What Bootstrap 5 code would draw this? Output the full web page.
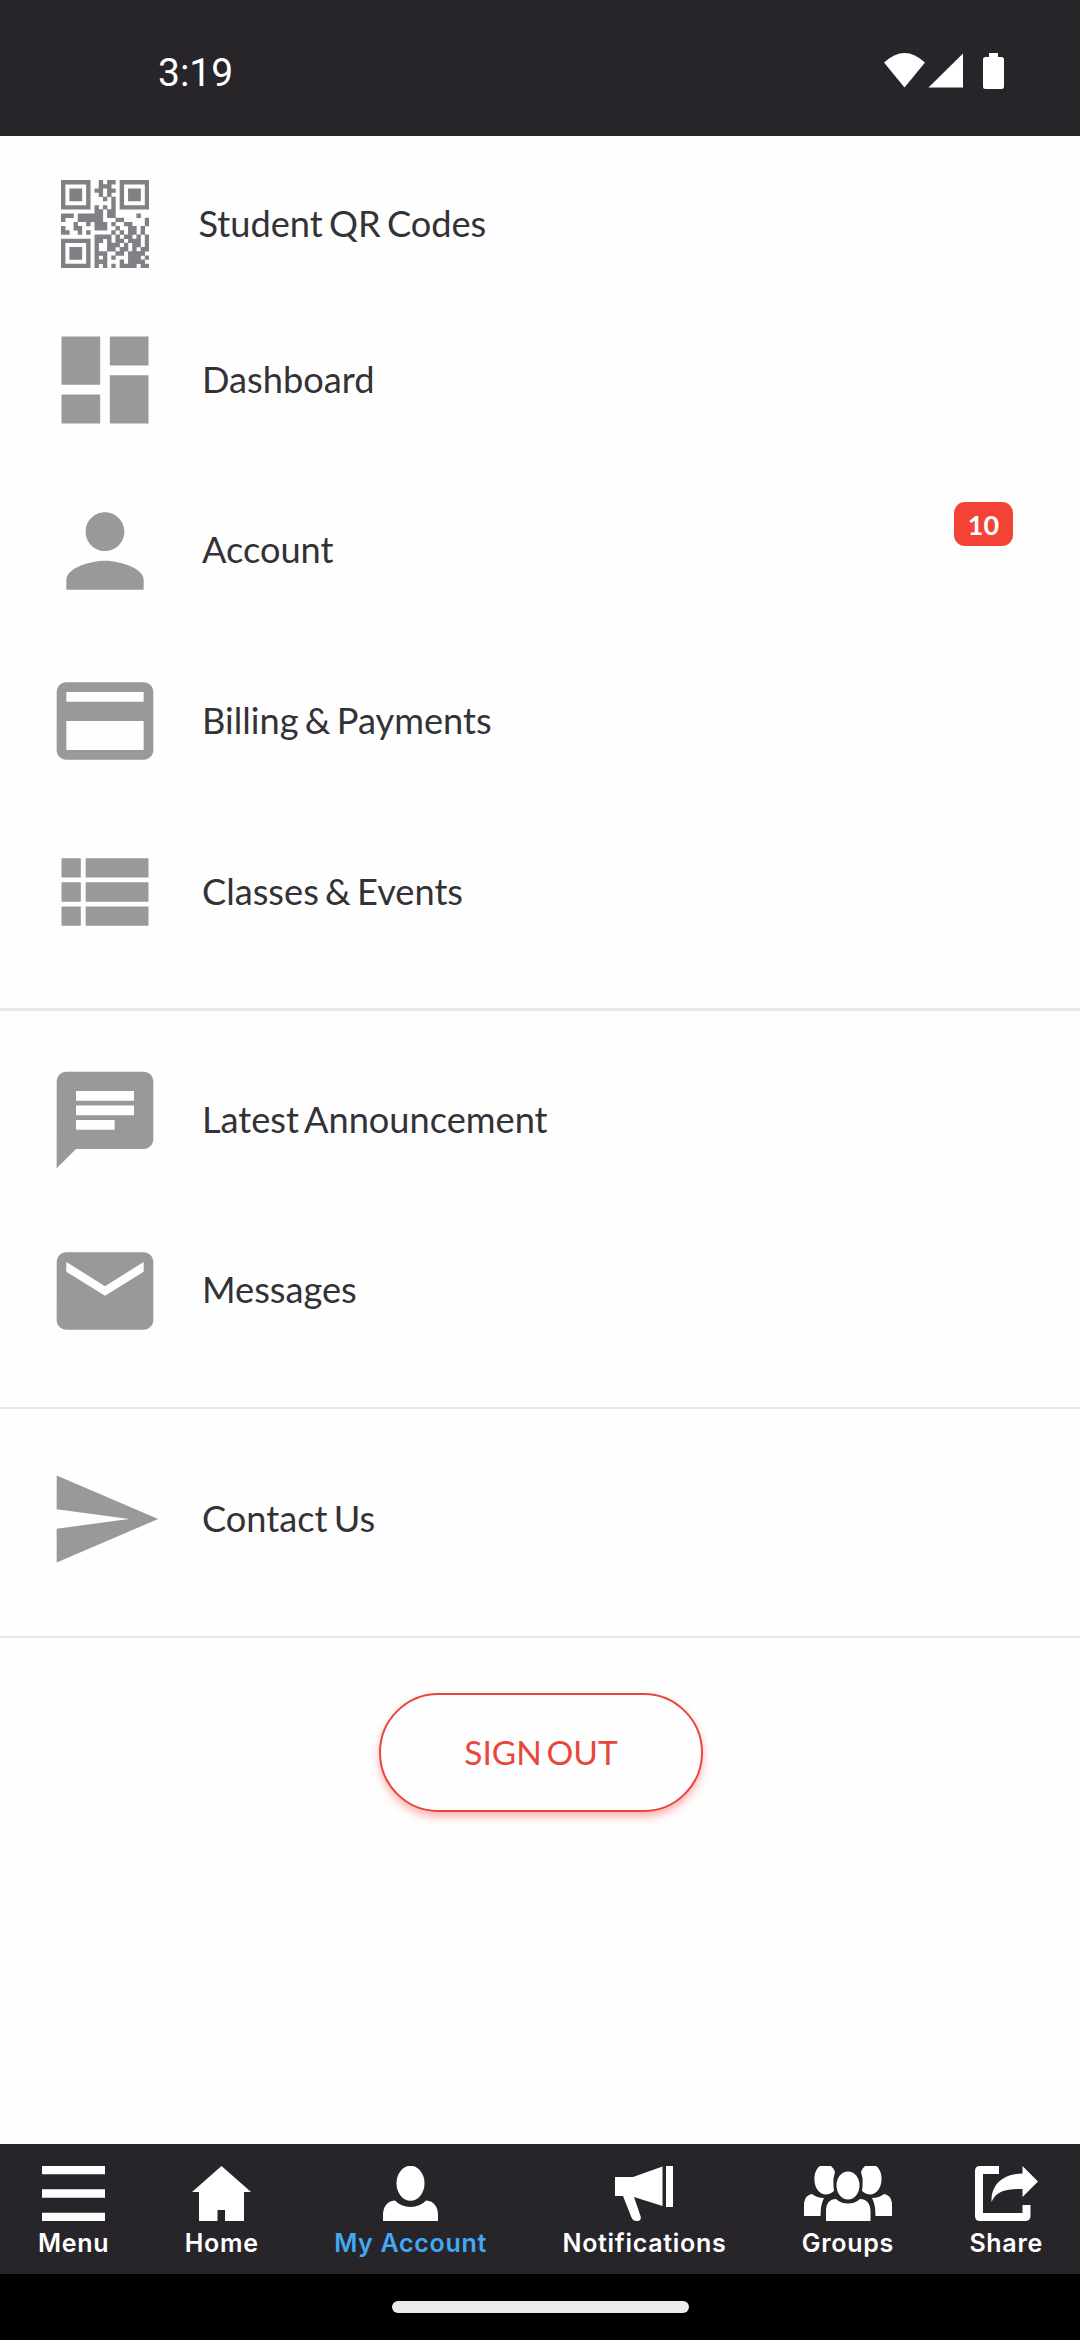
<!DOCTYPE html>
<html lang="en">
<head>
<meta charset="utf-8">
<meta name="viewport" content="width=device-width, initial-scale=1">
<title>My Account</title>
<link rel="stylesheet" href="https://cdn.jsdelivr.net/npm/bootstrap@5.3.0/dist/css/bootstrap.min.css">
<style>
  body { background: #fefefe; color: #333236; font-family: Lato, "Open Sans", sans-serif; height: 2340px; overflow: hidden; }
  svg { display: block; flex: none; }
  .statusbar { height: 136px; background: #272529; padding: 7px 76px 0 158px; font-family: Roboto, sans-serif; font-size: 39px; line-height: 1; color: #fff; }
  .statusbar span { padding-top: 3px; }
  .menu-group { padding: 24px 0 30px; border-bottom: 2px solid #e8e8ea; }
  .menu-group.first { padding-top: 0; border-bottom-width: 3px; height: 875px; }
  .menu-group.middle { height: 398px; }
  .menu-group.last { height: 229px; padding-top: 25px; }
  .menu-row { height: 170.6px; padding: 0 67px 0 46.5px; font-size: 36.2px; line-height: 44px; word-spacing: -3px; color: inherit; text-decoration: none; }
  .menu-row svg { width: 116px; height: 116px; fill: #9a989b; margin-right: 39.5px; }
  .menu-row span:not(.badge) { padding-bottom: 3px; }
  .menu-row.qr { height: 159px; padding: 17px 0 0 61px; }
  .menu-row.qr svg { width: 88px; height: 88px; fill: #828084; margin-right: 49.500px; }
  .menu-row .count { width: 59px; height: 44px; margin-bottom: 54px; padding: 0; border-radius: 11px; background: #f44336; font-size: 27px; font-weight: 700; line-height: 45px; }
  .btn-signout { width: 324px; height: 119px; margin: 55px 0 0 2px; padding: 0; border: 2px solid #e8473b; border-radius: 60px; background: #fefefe; color: #e8473b; font-size: 33.5px; word-spacing: -4px; box-shadow: 0 5px 9px rgba(244,67,54,.38); }
  .tabs { height: 130px; background: #272529; padding: 22px 37px 0 38px; font-family: Inter, sans-serif; font-weight: 600; font-size: 25px; line-height: 30px; letter-spacing: .7px; }
  .tabs a { color: #fff; text-decoration: none; }
  .tabs a.active { color: #42a9f3; }
  .tabs svg { height: 55px; margin-bottom: 7px; fill: #fff; }
  .gesture { height: 66px; background: #000; padding-top: 27px; }
  .gesture span { width: 297px; height: 12px; border-radius: 6px; background: #ebeaec; }
</style>
<script src="https://cdn.jsdelivr.net/npm/bootstrap@5.3.0/dist/js/bootstrap.bundle.min.js"></script>
</head>
<body class="d-flex flex-column">
<header class="statusbar d-flex align-items-center justify-content-between">
  <span>3:19</span>
  <svg width="120" height="37" viewBox="883 53 120 37" fill="#fff">
    <path d="M883 62.500Q903.500 43.500 924 62.500L903.500 87.500Z"/>
    <path d="M962 53.500V87.500H927.500Z"/>
    <path d="M988 53h9v4h3.500a2.500 2.500 0 0 1 2.500 2.500v27a2.500 2.500 0 0 1-2.500 2.500h-16a2.500 2.500 0 0 1-2.500-2.500v-27a2.500 2.500 0 0 1 2.500-2.500h3.500z"/>
  </svg>
</header>

<main class="flex-grow-1">
  <nav class="menu-group first">
    <a class="menu-row qr d-flex align-items-center" href="#"><svg id="qr" viewBox="0 0 21 21" preserveAspectRatio="none"><path/></svg><span>Student QR Codes</span></a>
    <a class="menu-row d-flex align-items-center" href="#"><svg viewBox="0 0 24 24"><path d="M3 13h8V3H3v10zm0 8h8v-6H3v6zm10 0h8V11h-8v10zm0-18v6h8V3h-8z"/></svg><span>Dashboard</span></a>
    <a class="menu-row d-flex align-items-center" href="#"><svg viewBox="0 0 24 24"><path d="M12 12c2.210 0 4-1.790 4-4s-1.790-4-4-4-4 1.790-4 4 1.790 4 4 4zm0 2c-2.670 0-8 1.340-8 4v2h16v-2c0-2.660-5.330-4-8-4z"/></svg><span>Account</span><span class="badge count ms-auto">10</span></a>
    <a class="menu-row d-flex align-items-center" href="#"><svg viewBox="0 0 24 24"><path d="M20 4H4c-1.110 0-1.990.89-1.990 2L2 18c0 1.110.89 2 2 2h16c1.110 0 2-.89 2-2V6c0-1.110-.89-2-2-2zm0 14H4v-6h16v6zm0-10H4V6h16v2z"/></svg><span>Billing &amp; Payments</span></a>
    <a class="menu-row d-flex align-items-center" href="#"><svg viewBox="0 0 24 24"><path d="M3 14h4v-4H3v4zm0 5h4v-4H3v4zM3 9h4V5H3v4zm5 5h13v-4H8v4zm0 5h13v-4H8v4zM8 5v4h13V5H8z"/></svg><span>Classes &amp; Events</span></a>
  </nav>
  <nav class="menu-group middle">
    <a class="menu-row d-flex align-items-center" href="#"><svg viewBox="0 0 24 24"><path d="M20 2H4c-1.100 0-1.990.9-1.990 2L2 22l4-4h14c1.100 0 2-.9 2-2V4c0-1.100-.9-2-2-2zM6 9h12v2H6V9zm8 5H6v-2h8v2zm4-6H6V6h12v2z"/></svg><span>Latest Announcement</span></a>
    <a class="menu-row d-flex align-items-center" href="#"><svg viewBox="0 0 24 24"><path d="M20 4H4c-1.100 0-1.990.9-1.990 2L2 18c0 1.100.9 2 2 2h16c1.100 0 2-.9 2-2V6c0-1.100-.9-2-2-2zm0 4l-8 5-8-5V6l8 5 8-5v2z"/></svg><span>Messages</span></a>
  </nav>
  <nav class="menu-group last">
    <a class="menu-row d-flex align-items-center" href="#"><svg viewBox="0 0 24 24"><path d="M2.010 21L23 12 2.010 3 2 10l15 2-15 2z"/></svg><span>Contact Us</span></a>
  </nav>
  <div class="d-flex justify-content-center"><button class="btn btn-signout" type="button">SIGN OUT</button></div>
</main>

<nav class="tabs d-flex justify-content-between">
  <a class="d-flex flex-column align-items-center" href="#"><svg width="63" viewBox="0 0 63 55"><path d="M0 0h63v8.300H0zM0 23.300h63v8.400H0zM0 46.700h63V55H0z"/></svg>Menu</a>
  <a class="d-flex flex-column align-items-center" href="#"><svg width="59" viewBox="0 0 59 55"><path d="M29.500 0L59 26h-7v29H33V44h-7.500v11H7V26H0z"/></svg>Home</a>
  <a class="active d-flex flex-column align-items-center" href="#"><svg width="55" viewBox="0 0 55 55"><ellipse cx="27.500" cy="17.300" rx="14" ry="17.500"/><path d="M0 55V49C0 41 4 35 12 34.500Q18 41 27.500 41T43 34.500C51 35 55 41 55 49V55Z"/></svg>My Account</a>
  <a class="d-flex flex-column align-items-center" href="#"><svg width="58" viewBox="0 0 58 55"><path d="M51 0h7v41h-7zM47.500 0.500V40L19 31L25.500 50C26.500 53 25 55 22 55C19 55 17.500 54 16.500 51.500L8 30H0V11H18Z"/></svg>Notifications</a>
  <a class="d-flex flex-column align-items-center" href="#"><svg width="88" viewBox="0 0 88 55"><ellipse cx="44" cy="19.500" rx="11.500" ry="14"/><path d="M22 55V45C22 37 26 33 32 33Q37 37.500 44 37.500T56 33C62 33 66.500 37 66.500 45V55Z"/><path id="g" d="M16 0H27Q30 2.500 31 6Q28.500 13 29.500 20L30 25Q26 28.500 21 28.500C9 27 7 6 16 0ZM8 28Q13 32 20 32Q16.500 38 16.500 50H0V37Q1 29 8 28Z"/><use href="#g" transform="matrix(-1 0 0 1 88 0)"/></svg>Groups</a>
  <a class="d-flex flex-column align-items-center" href="#"><svg width="63" viewBox="0 0 63 55"><path d="M24 0V8H8V47H47.500V39H55.500V50Q55.500 55 50 55H5Q0 55 0 50V5Q0 0 5 0Z"/><path d="M47.500 0L63 15.500L47.500 31V23C32 22.500 21 25 16.500 36C16 18 28 8 47.500 7.500Z"/></svg>Share</a>
</nav>
<div class="gesture d-flex justify-content-center"><span></span></div>

<script>
  // One string per module row; "#" is a dark module.
  const rows = [
    "#######..#.##.#######",
    "#.....#..###..#.....#",
    "#.###.#.##.##.#.###.#",
    "#.###.#..#.#..#.###.#",
    "#.###.#...#.#.#.###.#",
    "#.....#.....#.#.....#",
    "#######.#.#.#.#######",
    "........##.##........",
    "###.######.##.....#..",
    "#...######...##.....#",
    "...#..#.###.#..##...#",
    "#..##...###..#..##.#.",
    "##..#.#.....#.#.##.#.",
    "........####.#.##.#.#",
    "#######.##.#.##.###.#",
    "#.....#.#..###.#.##.#",
    "#.###.#.#..##.##.#.##",
    "#.###.#.###..##.####.",
    "#.###.#.#.#.#...###.#",
    "#.....#.###...#.####.",
    "#######.#.#.#.####.##"
  ];
  document.querySelector("#qr path").setAttribute("d",
    rows.map((r, y) => [...r].map((c, x) => c === "#" ? `M${x} ${y}h1.050v1.050h-1.050z` : "").join("")).join(""));
</script>
</body>
</html>
